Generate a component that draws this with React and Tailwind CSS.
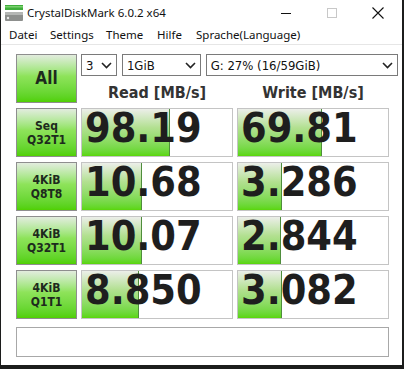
const rows = [
	{ a: "Seq", b: "Q32T1", read: "98.19", write: "69.81", rw: 88, ww: 84 },
	{ a: "4KiB", b: "Q8T8", read: "10.68", write: "3.286", rw: 60, ww: 44 },
	{ a: "4KiB", b: "Q32T1", read: "10.07", write: "2.844", rw: 60, ww: 43 },
	{ a: "4KiB", b: "Q1T1", read: "8.850", write: "3.082", rw: 57, ww: 44 },
];

const Chevron = () => (
	<svg width="11" height="7" viewBox="0 0 11 7" className="shrink-0">
		<path d="M1 1 L5.5 5.5 L10 1" fill="none" stroke="#222" strokeWidth="1.6" />
	</svg>
);

const Select = ({ w, children }) => (
	<div
		className={`${w} h-[22px] flex items-center justify-between pl-[4px] pr-[4px] bg-white border border-[#7a7a7a] text-[13px] text-[#111] leading-none`}
	>
		<span>{children}</span>
		<Chevron />
	</div>
);

const GreenButton = ({ children, className = "" }) => (
	<div
		className={`flex flex-col items-center justify-center border border-[#8e8e8e] bg-gradient-to-b from-[#e2ecde] via-[#8ee35a] via-45% to-[#50d000] text-[#1d2a1d] font-bold ${className}`}
	>
		{children}
	</div>
);

const Meter = ({ value, fill }) => (
	<div className="relative h-[49px] bg-white border border-[#c4c4c4]">
		<div
			className="absolute left-0 top-0 bottom-0 bg-gradient-to-b from-[#eceee9] via-[#b2e090] via-40% to-[#5ad606] border-r border-[#4f8d3c]"
			style={{ width: fill }}
		/>
		<div className="relative pl-[3px] text-[41px] leading-[38px] font-bold text-[#1e1e1e]">
			{value}
		</div>
	</div>
);

export default function App() {
	return (
		<div className="w-[404px] h-[369px] bg-[#1c1d1c] overflow-hidden">
			<div className="ml-[1px] w-[401px] h-[365px] bg-white flex flex-col font-['DejaVu_Sans_Condensed','DejaVu_Sans',sans-serif]">
				{/* title bar */}
				<div className="h-[26px] flex items-center font-['Noto_Sans',sans-serif] text-[11.5px] text-[#111]">
					<svg width="18" height="16" viewBox="0 0 18 16" className="ml-[4px] mr-[4px]">
						<rect x="0" y="0" width="18" height="5" fill="#3fae3a" />
						<rect x="0" y="1" width="18" height="1.5" fill="#7ad06e" />
						<rect x="0" y="7" width="18" height="9" rx="1" fill="#8d8f8d" />
						<rect x="0" y="7" width="18" height="3" fill="#b4b6b4" />
						<circle cx="3" cy="13" r="1.2" fill="#e8e8e8" />
					</svg>
					<span>CrystalDiskMark 6.0.2 x64</span>
					<div className="ml-auto flex items-center">
						<div className="w-[46px] h-[26px] flex items-center justify-center">
							<div className="w-[10px] h-[1px] bg-[#111]" />
						</div>
						<div className="w-[46px] h-[26px] flex items-center justify-center">
							<div className="w-[10px] h-[10px] border border-[#c8c8c8]" />
						</div>
						<div className="w-[46px] h-[26px] flex items-center justify-center mr-[1px]">
							<svg width="12" height="12" viewBox="0 0 12 12">
								<path d="M0.5 0.5 L11.5 11.5 M11.5 0.5 L0.5 11.5" stroke="#111" strokeWidth="1.1" />
							</svg>
						</div>
					</div>
				</div>
				{/* menu bar */}
				<div className="h-[19px] flex items-center pl-[8px] font-['Noto_Sans',sans-serif] text-[11.5px] text-[#111] border-b border-[#e6e6e6]">
					<span className="w-[41px]">Datei</span>
					<span className="w-[56px]">Settings</span>
					<span className="w-[51px]">Theme</span>
					<span className="w-[39px]">Hilfe</span>
					<span>Sprache(Language)</span>
				</div>

				{/* body */}
				<div className="pt-[9px] pl-[15px]">
					<div className="grid grid-cols-[61px_152px_152px] gap-x-[4px] gap-y-[5px]">
						<GreenButton className="h-[49px] text-[17px]">All</GreenButton>
						<div className="col-span-2 h-[49px] flex flex-col">
							<div className="flex gap-[5px] w-[317px]">
								<Select w="w-[36px]">3</Select>
								<Select w="w-[79px]">1GiB</Select>
								<Select w="w-[193px]">G: 27% (16/59GiB)</Select>
							</div>
							<div className="mt-[9px] grid grid-cols-[152px_152px] gap-x-[4px] text-[16px] leading-[16px] font-bold text-[#333]">
								<div className="text-center">Read [MB/s]</div>
								<div className="text-center">Write [MB/s]</div>
							</div>
						</div>

						{rows.map((r, i) => (
							<div key={i} className="contents">
								<GreenButton className="h-[49px] text-[12px] leading-[14px]">
									<span>{r.a}</span>
									<span>{r.b}</span>
								</GreenButton>
								<Meter value={r.read} fill={r.rw} />
								<Meter value={r.write} fill={r.ww} />
							</div>
						))}
					</div>
					<div className="mt-[8px] w-[373px] h-[30px] bg-white border border-[#a8a8a8]" />
				</div>
			</div>
		</div>
	);
}
